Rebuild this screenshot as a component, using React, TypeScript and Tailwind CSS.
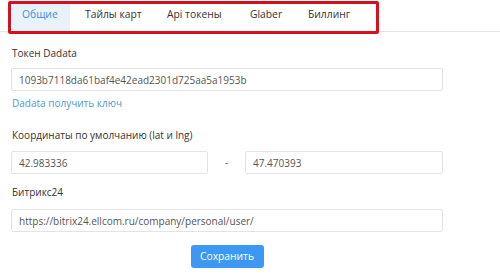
const tabs = [
  { label: "Общие", w: "w-[57px]" },
  { label: "Тайлы карт", w: "w-[82px]" },
  { label: "Api токены", w: "w-[83px]" },
  { label: "Glaber", w: "w-[58px]" },
  { label: "Биллинг", w: "w-[72px]" },
];

const inputCls =
  "h-[23px] rounded-[2px] border border-[#e3e3e3] bg-white px-[7px] text-[10px] text-[#555] outline-none";

export default function App() {
  return (
    <div
      className="relative h-[276px] w-[500px] overflow-hidden bg-white text-[#444]"
      style={{ fontFamily: '"Open Sans", "Noto Sans", sans-serif' }}
    >
      {/* Tabs */}
      <div className="flex h-[32px] items-stretch border-b border-[#e4e4e4] pl-[13px] pt-[3px]">
        {tabs.map((t, i) => (
          <div
            key={t.label}
            className={
              i === 0
                ? `${t.w} bg-[#e9f2fb] pl-[9px] pt-[4px] text-[10.3px] leading-[15px] text-[#3f8fd4]`
                : `${t.w} whitespace-nowrap pl-[15px] pt-[4px] text-[10.3px] leading-[15px] text-[#333]`
            }
          >
            {t.label}
          </div>
        ))}
      </div>

      {/* annotation box */}
      <div className="pointer-events-none absolute left-[8px] top-[1px] h-[33px] w-[371px] rounded-[2px] border-[3px] border-[#d3121f]" />

      <div className="flex w-[443px] flex-col pl-[11px] pt-[14px]">
        <label className="pl-[1px] text-[10px] leading-[15px] text-[#333]">Токен Dadata</label>
        <input className={`${inputCls} mt-[7px] w-full`} defaultValue="1093b7118da61baf4e42ead2301d725aa5a1953b" />
        <a className="mt-[5px] pl-[1px] text-[10px] leading-[15px] text-[#4d9bd4]">Dadata получить ключ</a>

        <label className="mt-[17px] pl-[1px] text-[10px] leading-[15px] text-[#333]">
          Координаты по умолчанию (lat и lng)
        </label>
        <div className="mt-[8px] flex items-center">
          <input className={`${inputCls} w-[197px] shrink-0`} defaultValue="42.983336" />
          <span className="flex-1 text-center text-[10px] text-[#555]">-</span>
          <input className={`${inputCls} w-[198px] shrink-0`} defaultValue="47.470393" />
        </div>

        <label className="mt-[11px] pl-[1px] text-[10px] leading-[15px] text-[#333]">Битрикс24</label>
        <input
          className={`${inputCls} mt-[9px] w-full`}
          defaultValue="https://bitrix24.ellcom.ru/company/personal/user/"
        />

        <div className="mt-[13px] flex justify-center">
          <button className="h-[23px] w-[73px] rounded-[3px] bg-[#3d98f3] text-[10.3px] text-white">
            Сохранить
          </button>
        </div>
      </div>
    </div>
  );
}
